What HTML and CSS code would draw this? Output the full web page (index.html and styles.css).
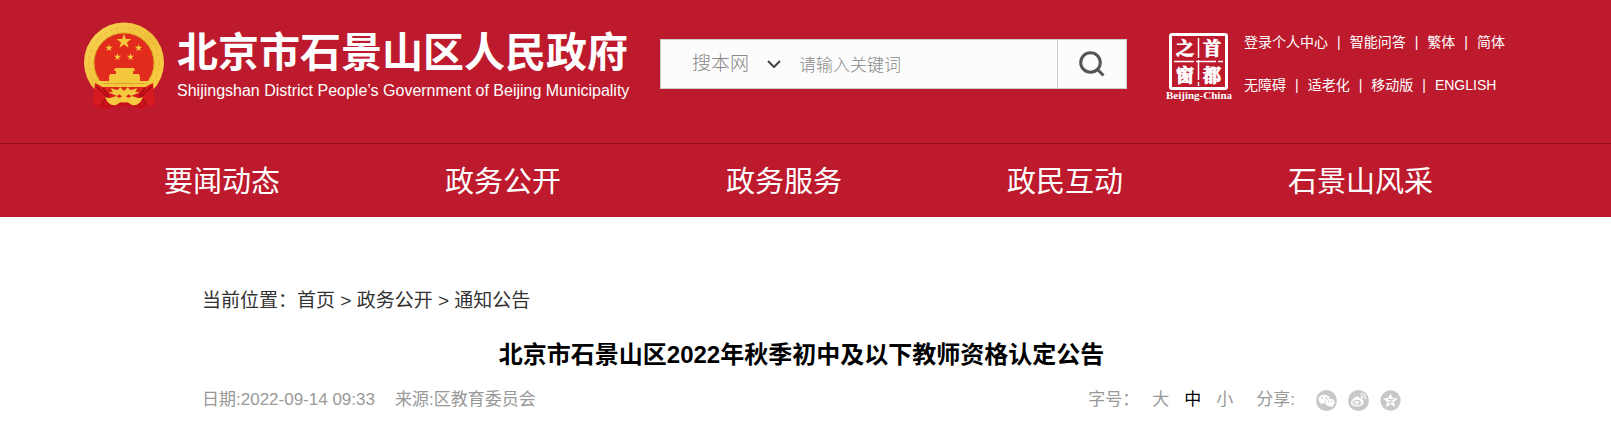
FILE: index.html
```html
<!DOCTYPE html>
<html lang="zh-CN">
<head>
<meta charset="utf-8">
<title>北京市石景山区2022年秋季初中及以下教师资格认定公告</title>
<link rel="stylesheet" href="styles.css">
</head>
<body>
<header class="header">
  <div class="masthead">
    <a class="brand" href="#">
      <svg class="emblem" viewBox="0 0 82 88" aria-hidden="true">
        <defs>
          <path id="star" d="M0-10 2.4-3.1 9.5-3.1 3.8 1.2 5.9 8.1 0 3.9-5.9 8.1-3.8 1.2-9.5-3.1-2.4-3.1Z"/>
          <linearGradient id="gold" x1="0" y1="0" x2="1" y2="1">
            <stop offset="0" stop-color="#f9d656"/><stop offset=".5" stop-color="#f0bf3a"/><stop offset="1" stop-color="#fad548"/>
          </linearGradient>
        </defs>
        <path d="M13 62 69 62 72 83 57 87 41 83 25 87 10 84Z" fill="#c8101c"/>
        <circle cx="41" cy="40.500" r="40" fill="url(#gold)"/>
        <circle cx="41" cy="40.500" r="35" fill="none" stroke="#e8b432" stroke-width="1" stroke-dasharray="3 3"/>
        <circle cx="41" cy="41" r="30" fill="#e22a1d" stroke="#d79a20"/>
        <g fill="#f3c83c">
          <use href="#star" transform="translate(41 19.500) scale(.78)"/>
          <use href="#star" transform="translate(26 26) scale(.38)"/>
          <use href="#star" transform="translate(55.500 26) scale(.38)"/>
          <use href="#star" transform="translate(34.500 35) scale(.38)"/>
          <use href="#star" transform="translate(47.500 35) scale(.38)"/>
          <path d="M32 46h19l1 3h-2v3h6l1 3H26l1-3h6v-3h-2ZM26 55h31v4h11l-3 6H17l-3-6h12Z"/>
        </g>
        <path d="M19 61h44l-2 1H21Z" fill="#e0a030"/>
        <path d="M19 65h44l-6 5H25Z" fill="#dd281c"/>
        <path d="M12 61q9 4 15 10l7 3 7-5 7 5 7-3q6-6 15-10l2 22-8 2-6-8-9-3-8 4-8-4-9 3-6 8-8-3Z" fill="#d71920"/>
        <path d="M13 64 24 75 17 84M69 64 58 75 65 84M20 66l6 9M62 66l-6 9" fill="none" stroke="#a90d18" stroke-width="1.500"/>
        <path d="M28 66q4 2 7 2l2-3 4 4 4-4 2 3q3 0 7-2-1 6-8 6l-5 4-5-4q-7 0-8-6ZM22 75q8 3 13 2l6-4 6 4q5 1 13-2-4 10-11 8l-8-5-8 5q-7 2-11-8Z" fill="#f4c940"/>
      </svg>
      <span class="brand-text">
        <span class="brand-name">北京市石景山区人民政府</span>
        <span class="brand-en">Shijingshan District People’s Government of Beijing Municipality</span>
      </span>
    </a>
    <form class="search" role="search">
      <span class="scope">
        <select class="scope-select" aria-label="搜索范围"><option>搜本网</option></select>
        <svg class="chevron" viewBox="0 0 14 8" aria-hidden="true"><path d="M1 1 7 7 13 1"/></svg>
      </span>
      <input class="keyword" type="text" placeholder="请输入关键词" aria-label="关键词">
      <button class="search-button" type="button" aria-label="搜索">
        <svg class="search-icon" viewBox="0 0 26 26" aria-hidden="true"><circle cx="11.500" cy="11.500" r="9.800"/><path d="m18.500 18.500 6 6"/></svg>
      </button>
    </form>
    <a class="seal" href="#">
      <svg class="seal-mark" viewBox="0 0 66 68" role="img" aria-label="首都之窗">
        <rect x="4.500" y="1.500" width="56" height="54" rx="1.500" fill="none" stroke="#fff" stroke-width="3"/>
        <path d="M32.500 5v48M8 28.500h49" stroke="#fff" stroke-width="1.500" stroke-dasharray="20 2"/>
        <g class="seal-char"><text x="19" y="22">之</text><text x="46" y="22">首</text><text x="19" y="49">窗</text><text x="46" y="49">都</text></g>
        <text class="seal-en" x="33" y="66">Beijing-China</text>
      </svg>
    </a>
    <nav class="quick" aria-label="快捷链接">
      <div class="quick-row"><a href="#">登录个人中心</a><span>|</span><a href="#">智能问答</a><span>|</span><a href="#">繁体</a><span>|</span><a href="#">简体</a></div>
      <div class="quick-row"><a href="#">无障碍</a><span>|</span><a href="#">适老化</a><span>|</span><a href="#">移动版</a><span>|</span><a href="#">ENGLISH</a></div>
    </nav>
  </div>
  <nav class="main-nav" aria-label="主导航">
    <ul class="nav-list">
      <li><a href="#">要闻动态</a></li>
      <li><a href="#">政务公开</a></li>
      <li><a href="#">政务服务</a></li>
      <li><a href="#">政民互动</a></li>
      <li><a href="#">石景山风采</a></li>
    </ul>
  </nav>
</header>
<main class="article">
  <nav class="crumbs" aria-label="当前位置">当前位置：<a href="#">首页</a> &gt; <a href="#">政务公开</a> &gt; <a href="#">通知公告</a></nav>
  <h1 class="title">北京市石景山区2022年秋季初中及以下教师资格认定公告</h1>
  <div class="meta">
    <span>日期:2022-09-14 09:33</span>
    <span class="source">来源:区教育委员会</span>
    <div class="sizes">
      <span class="sizes-label">字号：</span>
      <button type="button" class="size">大</button>
      <button type="button" class="size size-on">中</button>
      <button type="button" class="size">小</button>
    </div>
    <div class="share">
      <span class="share-label">分享:</span>
      <a href="#" aria-label="微信"><svg viewBox="0 0 20 20"><circle cx="10" cy="10" r="10" fill="#c8c8c8"/><path d="M8 4.500c-3.200 0-5.500 1.800-5.500 4.200 0 1.300.8 2.500 2 3.200L4 13.700l2-1c.8.200 1.500.3 2.300.2-.4-3 2-5 5-5C12.800 5.800 10.700 4.500 8 4.500Z" fill="#fff"/><path d="M13.400 8.400c-2.600 0-4.500 1.600-4.500 3.600s1.900 3.600 4.500 3.600l1.400-.2 1.700.9-.4-1.500c1.100-.7 1.700-1.700 1.700-2.800 0-2-1.900-3.600-4.400-3.600Z" fill="#fff"/><g fill="#c8c8c8"><circle cx="6" cy="7.500" r=".8"/><circle cx="9.800" cy="7.500" r=".8"/><circle cx="12" cy="11" r=".7"/><circle cx="15" cy="11" r=".7"/></g></svg></a>
      <a href="#" aria-label="微博"><svg viewBox="0 0 20 20"><circle cx="10" cy="10" r="10" fill="#c8c8c8"/><path d="M8.500 6.200c1-.4 2.200-.2 1.800 1.600 2-.8 3.500-.3 2.900 1.400 3.600 1.300 1.400 6.600-4.700 6.600-3.400 0-5.700-1.600-5.700-3.800 0-2.400 3.500-5.100 5.700-5.800Z" fill="#fff"/><ellipse cx="8.300" cy="12" rx="4" ry="2.700" fill="#c8c8c8"/><ellipse cx="8" cy="12.200" rx="2.400" ry="2" fill="#fff"/><circle cx="7.500" cy="12.500" r=".8" fill="#c8c8c8"/><path d="M12.200 3.600c3-.5 5 2 4.200 4.700M12.400 5.900c1.300-.2 2 .7 1.700 2" fill="none" stroke="#fff" stroke-width="1.100" stroke-linecap="round"/></svg></a>
      <a href="#" aria-label="QQ空间"><svg viewBox="0 0 20 20"><circle cx="10" cy="10" r="9.700" fill="#c8c8c8"/><path d="m10 3 2 4.500 5 .5-3.700 3.300 1.100 4.900L10 13.600l-4.400 2.600 1.100-4.900L3 8l5-.5Z" fill="#fff"/><path d="M7.500 9h4.700l-4 3c1.500.3 3.200.3 4.500-.1" fill="none" stroke="#c8c8c8"/></svg></a>
    </div>
  </div>
</main>
</body>
</html>
```
FILE: styles.css
```css
* { box-sizing: border-box; }

body {
  margin: 0;
  background: #fff;
  color: #333;
  font-family: "Liberation Sans", "Noto Sans CJK SC", sans-serif;
}

a { color: inherit; text-decoration: none; }

button, input, select { font: inherit; }

.header {
  background: #bd1a2d;
  color: #fff;
}

.masthead {
  display: flex;
  align-items: flex-start;
  height: 143px;
  padding: 22px 83px 0;
}

.brand {
  display: flex;
  gap: 12px;
  width: 577px;
}

.emblem { width: 82px; height: 88px; }

.brand-text {
  display: flex;
  flex-direction: column;
  padding-top: 5px;
  white-space: nowrap;
}

.brand-name {
  font-size: 41px;
  font-weight: 700;
  line-height: 52px;
}

.brand-en {
  font-size: 16px;
  line-height: 24px;
}

.search {
  display: flex;
  width: 467px;
  height: 50px;
  margin-top: 17px;
  border: 1px solid #ccc;
  background: #fcfcfc;
}

.scope {
  display: flex;
  align-items: center;
  gap: 18px;
  padding-left: 31px;
}

.scope-select {
  appearance: none;
  width: 57px;
  padding: 0;
  border: 0;
  background: none;
  color: #888;
  font-size: 19px;
  font-weight: 300;
  line-height: 28px;
}

.chevron {
  width: 14px;
  height: 8px;
  fill: none;
  stroke: #444;
  stroke-width: 2;
}

.keyword {
  flex: 1;
  min-width: 0;
  padding: 4px 0 0 18px;
  border: 0;
  background: none;
  color: #333;
  font-size: 17px;
}

.keyword::placeholder { color: #888; font-weight: 300; }

.search-button {
  display: flex;
  align-items: center;
  justify-content: center;
  width: 69px;
  padding: 0;
  border: 0;
  border-left: 1px solid #ccc;
  background: none;
}

.search-icon {
  width: 26px;
  height: 26px;
  fill: none;
  stroke: #555;
  stroke-width: 3;
}

.seal { margin: 11px 0 0 39px; }

.seal-mark { display: block; width: 66px; height: 68px; }

.seal-char {
  fill: #fff;
  stroke: #fff;
  stroke-width: 1;
  font-family: "Noto Serif CJK SC", "Noto Sans CJK SC", serif;
  font-size: 18px;
  font-weight: 700;
  text-anchor: middle;
}

.seal-en {
  fill: #fff;
  font-family: "Liberation Serif", serif;
  font-size: 11px;
  font-weight: 700;
  text-anchor: middle;
}

.quick {
  display: flex;
  flex-direction: column;
  gap: 19px;
  margin: 8px 0 0 12px;
  font-size: 14px;
  line-height: 24px;
  white-space: nowrap;
}

.quick-row { display: flex; gap: 9px; }

.main-nav {
  border-top: 1px solid #930f20;
  padding: 0 107px 0 99px;
}

.nav-list {
  display: grid;
  grid-template-columns: repeat(5, 1fr);
  margin: 0;
  padding: 3px 0 0;
  list-style: none;
  font-size: 29px;
  line-height: 70px;
}

.nav-list li { padding-left: 65px; }

.article {
  padding: 70px 210px 0 202px;
}

.crumbs {
  font-size: 19px;
  line-height: 28px;
}

.title {
  margin: 22px 0 0;
  color: #000;
  font-size: 24px;
  line-height: 36px;
  text-align: center;
}

.meta {
  display: flex;
  align-items: center;
  margin-top: 15px;
  color: #999;
  font-size: 17px;
  line-height: 24px;
}

.source { margin-left: 20px; }

.sizes {
  display: flex;
  gap: 15px;
  margin-left: auto;
}

.sizes-label { margin-right: -2px; }

.size {
  padding: 0;
  border: 0;
  background: none;
  color: inherit;
}

.size-on { color: #000; }

.share {
  display: flex;
  align-items: center;
  gap: 11px;
  margin-left: 23px;
}

.share-label { margin-right: 10px; }

.share svg { display: block; width: 21px; height: 21px; }
```
